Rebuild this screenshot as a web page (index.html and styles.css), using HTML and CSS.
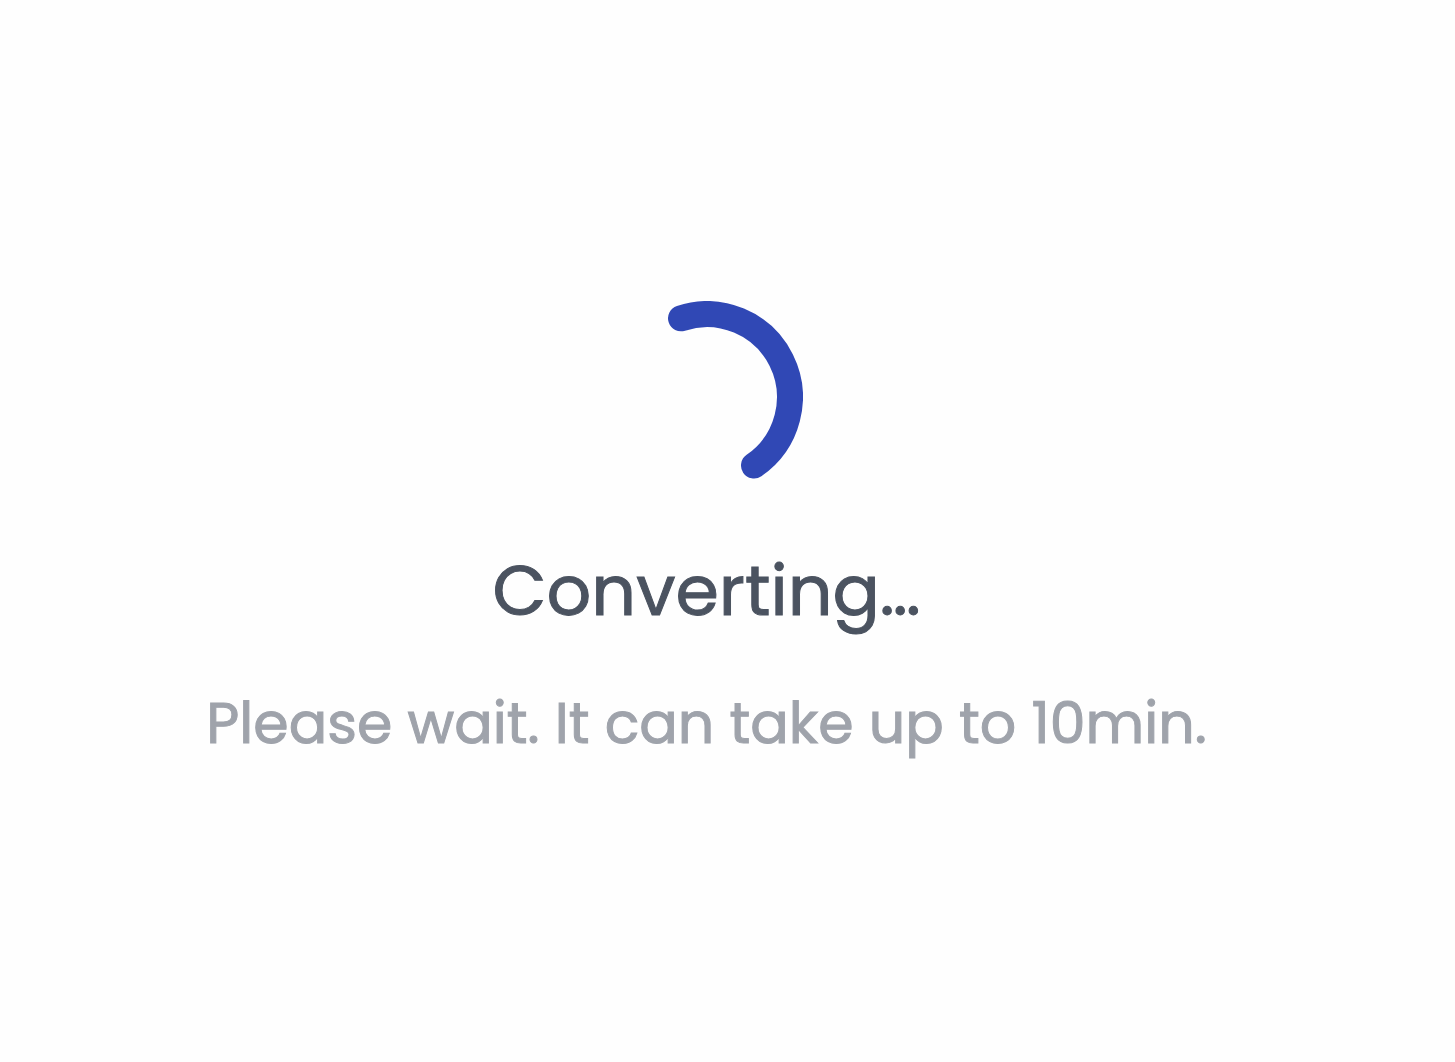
FILE: index.html
```html
<!DOCTYPE html>
<html lang="en">
<head>
  <meta charset="UTF-8">
  <meta name="viewport" content="width=device-width, initial-scale=1.0">
  <title>Converting</title>
  <link rel="stylesheet" href="styles.css">
</head>
<body>
  <main class="loader" role="status">
    <svg class="spinner" viewBox="0 0 192 192" aria-hidden="true">
      <path d="M70 17.3 A83 83 0 0 1 143 164.5" />
    </svg>
    <h1 class="title">Converting…</h1>
    <p class="message">Please wait. It can take up to 10min.</p>
  </main>
</body>
</html>
```

FILE: styles.css
```css
body {
  margin: 0;
  background-color: #fefefe;
  font-family: Poppins, Inter, "Liberation Sans", sans-serif;
}

.loader {
  display: flex;
  flex-direction: column;
  align-items: center;
  justify-content: center;
  box-sizing: border-box;
  min-height: 100vh;
  padding: 2px 42px 0 0;
  text-align: center;
  -webkit-text-stroke: 1px;
}

/* Spinner arc */
.spinner {
  width: 192px;
  height: 192px;
}
.spinner path {
  fill: none;
  stroke: #3048b5;
  stroke-width: 26;
  stroke-linecap: round;
}

.title {
  margin: 50px 0 0;
  color: #4b5360;
  font-size: 70px;
  font-weight: 400;
  line-height: 96px;
}

.message {
  margin: 44px 0 0;
  color: #9fa3ab;
  font-size: 57px;
  font-weight: 400;
  line-height: 80px;
}
```
